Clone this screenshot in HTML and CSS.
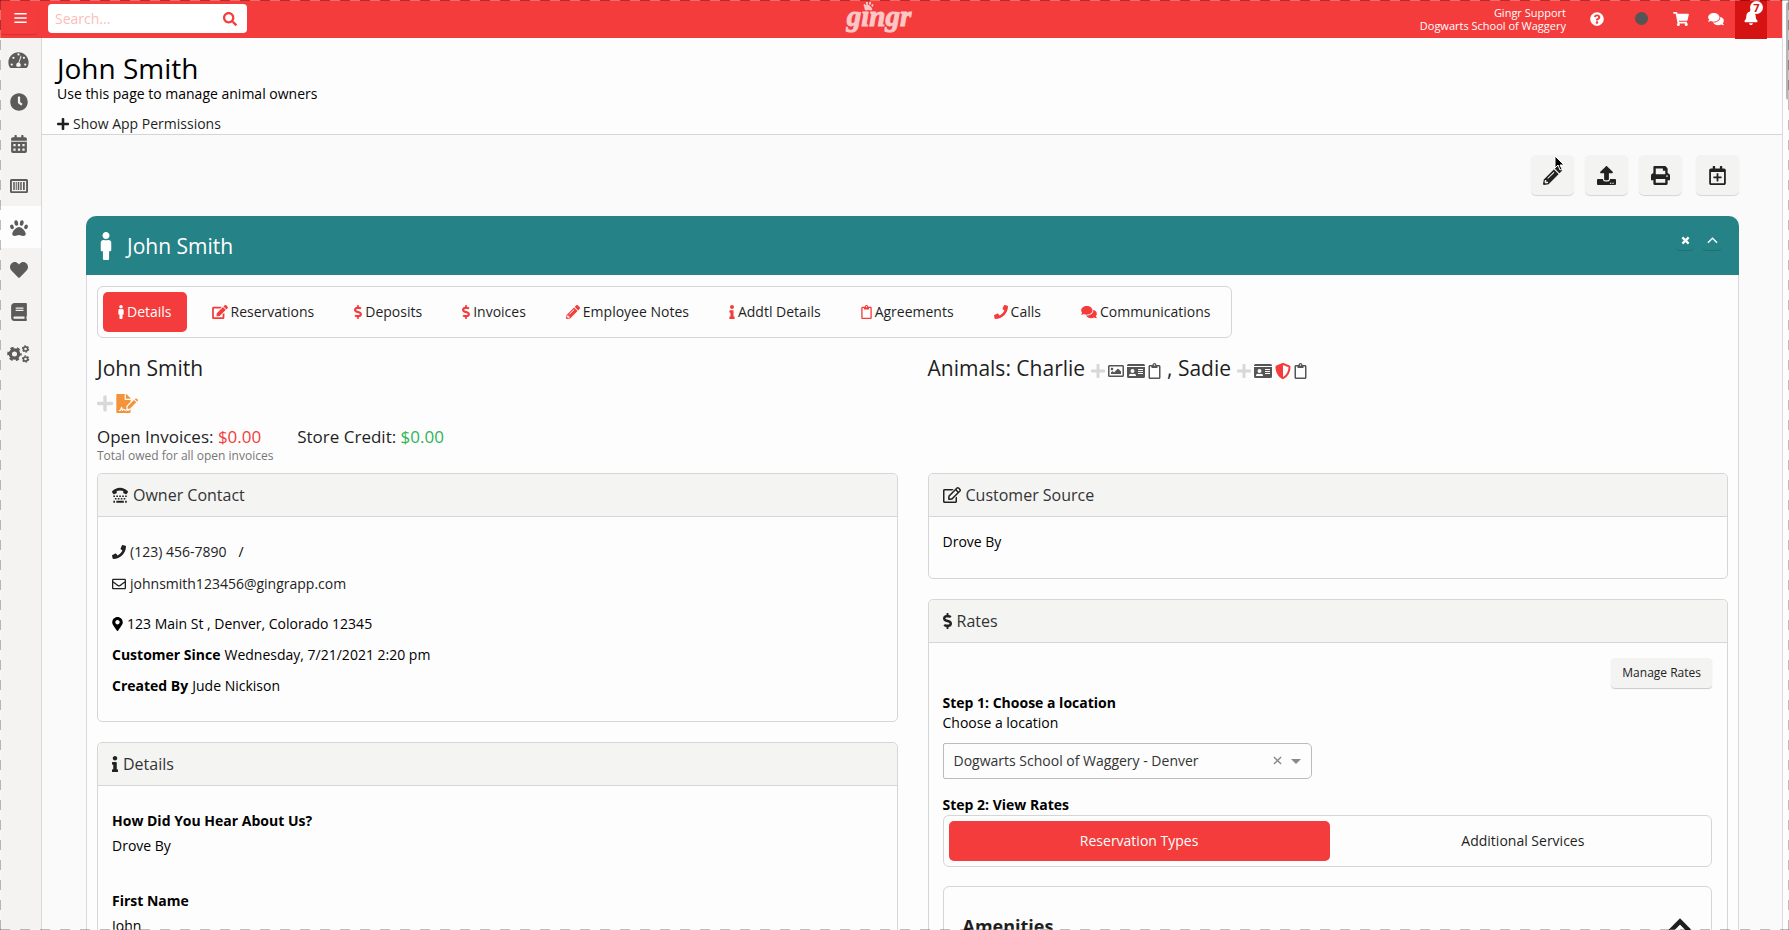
FILE: index.html
```html
<!DOCTYPE html>
<html lang="en">
  <head>
    <meta charset="UTF-8">
    <meta name="viewport" content="width=device-width, initial-scale=1.0">
    <title>John Smith</title>
    <link rel="stylesheet" href="styles.css">
  </head>
  <body>
    <!-- Icon sprite -->
    <svg class="sprite" aria-hidden="true">
      <symbol id="bars" viewBox="0 0 448 512"><path d="M0 70h448v56H0zM0 228h448v56H0zM0 386h448v56H0z"/></symbol>
      <symbol id="search" viewBox="0 0 512 512"><path d="M505 442.7L405.3 343c-4.5-4.5-10.6-7-17-7H372c27.6-35.3 44-79.7 44-128C416 93.1 322.9 0 208 0S0 93.1 0 208s93.1 208 208 208c48.3 0 92.7-16.4 128-44v16.3c0 6.4 2.5 12.5 7 17l99.7 99.7c9.4 9.4 24.6 9.4 33.9 0l28.3-28.3c9.4-9.4 9.4-24.6.1-34zM208 336c-70.7 0-128-57.2-128-128 0-70.7 57.2-128 128-128 70.7 0 128 57.2 128 128 0 70.7-57.2 128-128 128z"/></symbol>
      <symbol id="gauge" viewBox="0 0 576 512"><path fill-rule="evenodd" d="M288 32C129 32 0 161 0 320c0 53 14 102 39 145 6 9 16 15 27 15h444c11 0 21-6 27-15 25-43 39-92 39-145C576 161 447 32 288 32zM288 66a32 32 0 1 1 0 64 32 32 0 0 1 0-64zM96 352a32 32 0 1 1 0 64 32 32 0 0 1 0-64zM144 162a32 32 0 1 1 0 64 32 32 0 0 1 0-64zM442 162a32 32 0 1 1 0 64 32 32 0 0 1 0-64zM480 352a32 32 0 1 1 0 64 32 32 0 0 1 0-64zM353 129c13 4 20 18 16 31l-58 174c24 12 41 36 41 66 0 18-6 34-16 48h-96c-10-14-16-30-16-48 0-38 28-69 64-72l58-183c4-13 0-18 7-16z"/></symbol>
      <symbol id="clock" viewBox="0 0 512 512"><path d="M256,8C119,8,8,119,8,256S119,504,256,504,504,393,504,256,393,8,256,8Zm92.49,313h0l-20,25a16,16,0,0,1-22.49,2.5h0l-67-49.72a40,40,0,0,1-15-31.23V112a16,16,0,0,1,16-16h32a16,16,0,0,1,16,16V256l58,42.5A16,16,0,0,1,348.49,321Z"/></symbol>
      <symbol id="calendar" viewBox="0 0 448 512"><path fill-rule="evenodd" d="M0 192h448v272c0 26.500-21.500 48-48 48H48c-26.500 0-48-21.500-48-48zM64 256v64h64v-64zM192 256v64h64v-64zM320 256v64h64v-64zM64 384v64h64v-64zM192 384v64h64v-64zM320 384v64h64v-64zM0 160v-48c0-26.500 21.500-48 48-48h48V16q0-16 16-16h32q16 0 16 16v48h128V16q0-16 16-16h32q16 0 16 16v48h48c26.500 0 48 21.500 48 48v48z"/></symbol>
      <symbol id="barcode" viewBox="0 0 576 512"><path fill-rule="evenodd" d="M48 32h480q48 0 48 48v352q0 48-48 48H48q-48 0-48-48V80q0-48 48-48zM60 92v328h456V92zM104 130h48v252h-48zM184 130h32v252h-32zM248 130h48v252h-48zM328 130h48v252h-48zM416 130h56v252h-56z"/></symbol>
      <symbol id="paw" viewBox="0 0 512 512"><path d="M256 224c-79.410 0-192 122.760-192 200.250 0 34.900 26.810 55.750 71.740 55.750 48.840 0 81.090-25.080 120.260-25.080 39.510 0 71.850 25.080 120.260 25.080 44.930 0 71.740-20.850 71.740-55.750C448 346.760 335.410 224 256 224z"/><ellipse cx="56" cy="224" rx="50" ry="66" transform="rotate(-20 56 224)"/><ellipse cx="456" cy="224" rx="50" ry="66" transform="rotate(20 456 224)"/><ellipse cx="178" cy="114" rx="54" ry="78" transform="rotate(-14 178 114)"/><ellipse cx="334" cy="114" rx="54" ry="78" transform="rotate(14 334 114)"/></symbol>
      <symbol id="heart" viewBox="0 0 512 512"><path d="M462.3 62.6C407.5 15.9 326 24.3 275.7 76.2L256 96.5l-19.7-20.3C186.1 24.3 104.5 15.9 49.7 62.6c-62.8 53.6-66.1 149.8-9.9 207.9l193.500 199.800c12.500 12.900 32.800 12.900 45.300 0l193.500-199.800c56.300-58.100 53-154.300-9.800-207.900z"/></symbol>
      <symbol id="book" viewBox="0 0 448 512"><path d="M448 360V24c0-13.3-10.7-24-24-24H96C43 0 0 43 0 96v320c0 53 43 96 96 96h328c13.300 0 24-10.700 24-24v-16c0-7.500-3.500-14.300-8.900-18.700-4.200-15.400-4.200-59.300 0-74.700 5.400-4.300 8.900-11.100 8.900-18.600zM128 134c0-3.300 2.700-6 6-6h212c3.300 0 6 2.700 6 6v20c0 3.300-2.700 6-6 6H134c-3.300 0-6-2.700-6-6v-20zm0 64c0-3.300 2.700-6 6-6h212c3.300 0 6 2.700 6 6v20c0 3.300-2.700 6-6 6H134c-3.300 0-6-2.700-6-6v-20zm253.400 250H96c-17.700 0-32-14.300-32-32 0-17.600 14.400-32 32-32h285.400c-1.900 17.100-1.900 46.900 0 64z"/></symbol>
      <symbol id="cogs" viewBox="0 0 640 512"><g fill="none" stroke="currentColor"><circle cx="206" cy="256" r="118" stroke-width="92"/><circle cx="206" cy="256" r="176" stroke-width="60" stroke-dasharray="92 92.300" stroke-dashoffset="46"/><circle cx="520" cy="112" r="60" stroke-width="46"/><circle cx="520" cy="112" r="88" stroke-width="36" stroke-dasharray="46 46.100"/><circle cx="520" cy="400" r="60" stroke-width="46"/><circle cx="520" cy="400" r="88" stroke-width="36" stroke-dasharray="46 46.100"/></g></symbol>
      <symbol id="male" viewBox="0 0 192 512"><path d="M96 0c35.346 0 64 28.654 64 64s-28.654 64-64 64-64-28.654-64-64S60.654 0 96 0m48 144h-11.360c-22.711 10.443-49.590 10.894-73.280 0H48c-26.510 0-48 21.490-48 48v136c0 13.255 10.745 24 24 24h16v136c0 13.255 10.745 24 24 24h64c13.255 0 24-10.745 24-24V352h16c13.255 0 24-10.745 24-24V192c0-26.510-21.490-48-48-48z"/></symbol>
      <symbol id="edit" viewBox="0 0 576 512"><path d="M402.6 83.2l90.2 90.2c3.8 3.8 3.8 10 0 13.8L274.4 405.6l-92.8 10.3c-12.4 1.4-22.9-9.1-21.5-21.5l10.3-92.8L388.8 83.2c3.800-3.800 10-3.800 13.800 0zm162-22.900l-48.800-48.800c-15.200-15.200-39.900-15.200-55.200 0l-35.400 35.400c-3.800 3.800-3.800 10 0 13.800l90.200 90.200c3.800 3.800 10 3.800 13.800 0l35.400-35.400c15.200-15.300 15.200-40 0-55.200zM384 346.200V448H64V128h229.800c3.200 0 6.200-1.300 8.500-3.500l40-40c7.600-7.600 2.200-20.500-8.500-20.500H48C21.500 64 0 85.500 0 112v352c0 26.500 21.500 48 48 48h352c26.500 0 48-21.500 48-48V306.200c0-10.700-12.900-16-20.500-8.500l-40 40c-2.200 2.300-3.500 5.300-3.500 8.500z"/></symbol>
      <symbol id="edit-line" viewBox="0 0 576 512"><path d="M402.3 344.9l32-32c5-5 13.7-1.5 13.7 5.7V464c0 26.5-21.5 48-48 48H48c-26.500 0-48-21.500-48-48V112c0-26.500 21.500-48 48-48h273.500c7.100 0 10.700 8.600 5.700 13.700l-32 32c-1.500 1.500-3.500 2.300-5.700 2.300H48v352h352V350.500c0-2.100.8-4.100 2.300-5.600zm156.600-201.800L296.300 405.700l-90.400 10c-26.200 2.900-48.500-19.200-45.600-45.600l10-90.400L432.900 17.100c22.900-22.900 59.900-22.900 82.700 0l43.200 43.200c22.900 22.900 22.900 60 .1 82.800zM460.100 174L402 115.900 216.200 301.800l-7.300 65.300 65.300-7.300L460.100 174zm64.800-79.700l-43.200-43.200c-4.100-4.100-10.800-4.100-14.800 0L436 82l58.100 58.100 30.900-30.900c4-4.200 4-10.800-.1-14.900z"/></symbol>
      <symbol id="dollar" viewBox="0 0 288 512"><path d="M209.2 233.4l-108-31.6C88.7 198.2 80 186.5 80 173.5c0-16.3 13.2-29.5 29.5-29.5h66.3c12.2 0 24.2 3.7 34.2 10.5 6.1 4.1 14.3 3.1 19.5-2l34.8-34c7.1-6.9 6.1-18.4-1.8-24.5C238 74.800 207.400 64.100 176 64V16c0-8.800-7.200-16-16-16h-32c-8.800 0-16 7.200-16 16v48h-2.500C45.800 64-5.400 118.700.5 183.600c4.200 46.100 39.400 83.600 83.800 96.600l102.500 30c12.500 3.700 21.200 15.300 21.200 28.300 0 16.300-13.200 29.500-29.500 29.500h-66.300C100 368 88 364.300 78 357.500c-6.100-4.100-14.300-3.100-19.500 2l-34.800 34c-7.100 6.900-6.100 18.400 1.800 24.500 24.500 19.200 55.100 29.900 86.500 30v48c0 8.800 7.200 16 16 16h32c8.800 0 16-7.200 16-16v-48.200c46.600-.9 90.300-28.600 105.700-72.700 21.500-61.600-14.600-124.800-72.500-141.700z"/></symbol>
      <symbol id="pencil" viewBox="0 0 512 512"><path d="M497.9 142.1l-46.1 46.1c-4.7 4.7-12.3 4.7-17 0l-111-111c-4.7-4.7-4.7-12.3 0-17l46.1-46.1c18.7-18.7 49.1-18.7 67.9 0l60.1 60.1c18.8 18.7 18.8 49.1 0 67.9zM284.2 99.8L21.6 362.4.4 483.9c-2.9 16.4 11.4 30.6 27.8 27.8l121.5-21.3 262.6-262.6c4.7-4.7 4.7-12.3 0-17l-111-111c-4.800-4.700-12.400-4.700-17.100 0zM124.100 339.900c-5.500-5.500-5.500-14.300 0-19.800l154-154c5.500-5.500 14.300-5.500 19.800 0s5.500 14.300 0 19.800l-154 154c-5.500 5.500-14.300 5.500-19.800 0zM88 424h48v36.300l-64.500 11.300-31.100-31.100L51.700 376H88v48z"/></symbol>
      <symbol id="info" viewBox="0 0 192 512"><path d="M20 424.229h20V279.771H20c-11.046 0-20-8.954-20-20V212c0-11.046 8.954-20 20-20h112c11.046 0 20 8.954 20 20v212.229h20c11.046 0 20 8.954 20 20V492c0 11.046-8.954 20-20 20H20c-11.046 0-20-8.954-20-20v-47.771c0-11.046 8.954-20 20-20zM96 0C56.235 0 24 32.235 24 72s32.235 72 72 72 72-32.235 72-72S135.764 0 96 0z"/></symbol>
      <symbol id="clipboard" viewBox="0 0 384 512"><path d="M336 64h-80c0-35.3-28.7-64-64-64s-64 28.7-64 64H48C21.5 64 0 85.5 0 112v352c0 26.5 21.5 48 48 48h288c26.500 0 48-21.500 48-48V112c0-26.500-21.500-48-48-48zM192 40c13.300 0 24 10.700 24 24s-10.700 24-24 24-24-10.700-24-24 10.700-24 24-24zm144 418c0 3.300-2.700 6-6 6H54c-3.300 0-6-2.700-6-6V118c0-3.300 2.700-6 6-6h42v36c0 6.600 5.400 12 12 12h168c6.600 0 12-5.400 12-12v-36h42c3.300 0 6 2.700 6 6z"/></symbol>
      <symbol id="phone" viewBox="0 0 512 512"><path d="M493.4 24.6l-104-24c-11.3-2.6-22.9 3.3-27.5 13.9l-48 112c-4.2 9.8-1.4 21.3 6.9 28l60.6 49.6c-36 76.7-98.9 140.5-177.2 177.2l-49.6-60.6c-6.8-8.3-18.2-11.1-28-6.9l-112 48C3.900 366.500-2 378.100.6 389.400l24 104C27.100 504.200 36.700 512 48 512c256.100 0 464-207.500 464-464 0-11.200-7.700-20.900-18.600-23.400z"/></symbol>
      <symbol id="comments" viewBox="0 0 576 512"><path d="M416 192c0-88.4-93.1-160-208-160S0 103.6 0 192c0 34.3 14.1 65.900 38 92-13.400 30.200-35.500 54.200-35.800 54.500-2.200 2.300-2.800 5.700-1.500 8.700S4.800 352 8 352c36.600 0 66.900-12.300 88.700-25 32.200 15.700 70.300 25 111.300 25 114.900 0 208-71.600 208-160zm122 220c23.900-26 38-57.700 38-92 0-66.900-53.500-124.200-129.300-148.100.9 6.600 1.300 13.300 1.300 20.100 0 105.900-107.700 192-240 192-10.800 0-21.300-.8-31.700-1.900C207.800 439.600 281.800 480 368 480c41 0 79.100-9.200 111.300-25 21.800 12.700 52.100 25 88.700 25 3.200 0 6.100-1.900 7.300-4.800 1.300-2.900.7-6.300-1.500-8.700-.3-.3-22.400-24.200-35.800-54.500z"/></symbol>
      <symbol id="question" viewBox="0 0 512 512"><path d="M504 256c0 136.997-111.043 248-248 248S8 392.997 8 256C8 119.083 119.043 8 256 8s248 111.083 248 248zM262.655 90c-54.497 0-89.255 22.957-116.549 63.758-3.536 5.286-2.353 12.415 2.715 16.258l34.699 26.310c5.205 3.947 12.621 3.008 16.665-2.122 17.864-22.658 30.113-35.797 57.303-35.797 20.429 0 45.698 13.148 45.698 32.958 0 14.976-12.363 22.667-32.534 33.976C247.128 238.528 216 254.941 216 296v4c0 6.627 5.373 12 12 12h56c6.627 0 12-5.373 12-12v-1.333c0-28.462 83.186-29.647 83.186-106.667 0-58.002-60.165-102-116.531-102zM256 338c-25.365 0-46 20.635-46 46 0 25.364 20.635 46 46 46s46-20.636 46-46c0-25.365-20.635-46-46-46z"/></symbol>
      <symbol id="cart" viewBox="0 0 576 512"><path d="M528.12 301.319l47.273-208C578.806 78.301 567.391 64 551.990 64H159.208l-9.166-44.810C147.758 8.021 137.930 0 126.529 0H24C10.745 0 0 10.745 0 24v16c0 13.255 10.745 24 24 24h69.883l70.248 343.435C147.325 417.100 136 435.222 136 456c0 30.928 25.072 56 56 56s56-25.072 56-56c0-15.674-6.447-29.835-16.824-40h209.647C430.447 426.165 424 440.326 424 456c0 30.928 25.072 56 56 56s56-25.072 56-56c0-22.172-12.888-41.332-31.579-50.405l5.517-24.276c3.413-15.018-8.002-29.319-23.403-29.319H218.117l-6.545-32h293.145c11.206 0 20.920-7.754 23.403-18.681z"/></symbol>
      <symbol id="bell" viewBox="0 0 448 512"><path d="M224 512c35.320 0 63.970-28.650 63.970-64H160.030c0 35.350 28.650 64 63.970 64zm215.390-149.710c-19.320-20.760-55.470-51.990-55.470-154.290 0-77.700-54.480-139.900-127.940-155.160V32c0-17.670-14.320-32-31.980-32s-31.980 14.330-31.980 32v20.840C118.560 68.100 64.080 130.300 64.080 208c0 102.300-36.150 133.530-55.470 154.290-6 6.450-8.660 14.160-8.610 21.710.11 16.400 12.980 32 32.100 32h383.800c19.120 0 32-15.600 32.100-32 .05-7.550-2.610-15.270-8.610-21.710z"/></symbol>
      <symbol id="upload" viewBox="0 0 512 512"><path d="M296 384h-80c-13.3 0-24-10.7-24-24V192h-87.7c-17.8 0-26.7-21.5-14.1-34.1L242.3 5.7c7.5-7.5 19.800-7.500 27.300 0l152.200 152.200c12.600 12.600 3.700 34.100-14.100 34.100H320v168c0 13.300-10.700 24-24 24zm216-8v112c0 13.300-10.700 24-24 24H24c-13.300 0-24-10.700-24-24V376c0-13.300 10.700-24 24-24h136v8c0 30.900 25.100 56 56 56h80c30.900 0 56-25.100 56-56v-8h136c13.300 0 24 10.700 24 24zm-124 88c0-11-9-20-20-20s-20 9-20 20 9 20 20 20 20-9 20-20zm64 0c0-11-9-20-20-20s-20 9-20 20 9 20 20 20 20-9 20-20z"/></symbol>
      <symbol id="print" viewBox="0 0 512 512"><path d="M448 192V77.250c0-8.490-3.370-16.620-9.370-22.630L393.370 9.370c-6-6-14.140-9.370-22.630-9.370H96C78.330 0 64 14.330 64 32v160c-35.350 0-64 28.650-64 64v112c0 8.840 7.160 16 16 16h48v96c0 17.670 14.330 32 32 32h320c17.670 0 32-14.330 32-32v-96h48c8.840 0 16-7.160 16-16V256c0-35.350-28.650-64-64-64zm-64 256H128v-96h256v96zm0-224H128V64h192v48c0 8.840 7.160 16 16 16h48v96zm48 72c-13.250 0-24-10.750-24-24 0-13.260 10.750-24 24-24s24 10.740 24 24c0 13.250-10.750 24-24 24z"/></symbol>
      <symbol id="calendar-plus" viewBox="0 0 448 512"><path d="M336 292v24c0 6.6-5.4 12-12 12h-76v76c0 6.6-5.4 12-12 12h-24c-6.600 0-12-5.400-12-12v-76h-76c-6.600 0-12-5.400-12-12v-24c0-6.600 5.400-12 12-12h76v-76c0-6.600 5.400-12 12-12h24c6.600 0 12 5.400 12 12v76h76c6.600 0 12 5.400 12 12zm112-180v352c0 26.500-21.500 48-48 48H48c-26.500 0-48-21.500-48-48V112c0-26.500 21.500-48 48-48h48V12c0-6.600 5.400-12 12-12h40c6.600 0 12 5.400 12 12v52h128V12c0-6.600 5.400-12 12-12h40c6.600 0 12 5.400 12 12v52h48c26.500 0 48 21.500 48 48zm-48 346V160H48v298c0 3.300 2.700 6 6 6h340c3.300 0 6-2.700 6-6z"/></symbol>
      <symbol id="image" viewBox="0 0 512 512"><path d="M464 64H48C21.490 64 0 85.490 0 112v288c0 26.510 21.490 48 48 48h416c26.510 0 48-21.490 48-48V112c0-26.510-21.490-48-48-48zm-6 336H54a6 6 0 0 1-6-6V118a6 6 0 0 1 6-6h404a6 6 0 0 1 6 6v276a6 6 0 0 1-6 6zM128 152c-22.091 0-40 17.909-40 40s17.909 40 40 40 40-17.909 40-40-17.909-40-40-40zM96 352h320v-80l-87.515-87.515c-4.686-4.686-12.284-4.686-16.971 0L192 304l-39.515-39.515c-4.686-4.686-12.284-4.686-16.971 0L96 304v48z"/></symbol>
      <symbol id="id-card" viewBox="0 0 576 512"><path fill-rule="evenodd" d="M48 32h480q48 0 48 48v16H0V80q0-48 48-48zM0 128h576v304q0 48-48 48H48q-48 0-48-48zM176 192a64 64 0 1 0 0 128 64 64 0 0 0 0-128zM64 400q0 16 16 16h192q16 0 16-16c0-34-27-58-60-58q-52 14-104 0c-33 0-60 24-60 58zM352 192v32h160v-32zM352 256v32h160v-32zM352 320v32h160v-32z"/></symbol>
      <symbol id="shield" viewBox="0 0 512 512"><path d="M466.5 83.7l-192-80a48.15 48.15 0 0 0-36.9 0l-192 80C27.7 91.1 16 108.6 16 128c0 198.5 114.5 335.700 221.500 380.300 11.800 4.900 25.100 4.900 36.900 0C360.100 472.600 496 349.300 496 128c0-19.400-11.700-36.900-29.500-44.300zM256.100 446.300l-.1-381 175.900 73.300c-3.300 151.400-82.100 261.100-175.800 307.700z"/></symbol>
      <symbol id="envelope" viewBox="0 0 512 512"><path d="M464 64H48C21.490 64 0 85.490 0 112v288c0 26.510 21.490 48 48 48h416c26.510 0 48-21.490 48-48V112c0-26.510-21.490-48-48-48zm0 48v40.805c-22.422 18.259-58.168 46.651-134.587 106.490-16.841 13.247-50.201 45.072-73.413 44.701-23.208.375-56.579-31.459-73.413-44.701C106.180 199.465 70.425 171.067 48 152.805V112h416zM48 400V214.398c22.914 18.251 55.409 43.862 104.938 82.646 21.857 17.205 60.134 55.186 103.062 54.955 42.717.231 80.509-37.199 103.053-54.947 49.528-38.783 82.032-64.401 104.947-82.653V400H48z"/></symbol>
      <symbol id="marker" viewBox="0 0 384 512"><path d="M172.268 501.670C26.970 291.031 0 269.413 0 192 0 85.961 85.961 0 192 0s192 85.961 192 192c0 77.413-26.970 99.031-172.268 309.670-9.535 13.774-29.930 13.773-39.464 0zM192 272c44.183 0 80-35.817 80-80s-35.817-80-80-80-80 35.817-80 80 35.817 80 80 80z"/></symbol>
      <symbol id="tty" viewBox="0 0 512 512"><path d="M6 138C140-15 372-15 506 138c8 10 8 20 2 30l-38 54c-6 8-16 10-24 6l-76-30c-9-4-13-12-12-20l5-50c-66-24-148-24-214 0l5 50c1 8-3 16-12 20l-76 30c-8 4-18 2-24-6L4 168c-6-10-6-20 2-30zM44 268h52v50H44zM138 268h52v50h-52zM232 268h52v50h-52zM326 268h52v50h-52zM420 268h52v50h-52zM92 352h52v50H92zM186 352h52v50h-52zM280 352h52v50h-52zM374 352h52v50h-52zM44 440h52v60H44zM138 440h240v60H138zM420 440h52v60h-52z"/></symbol>
      <symbol id="file-sign" viewBox="0 0 576 512"><path d="M0 24Q0 0 24 0h200v136q0 24 24 24h136v48L272 320v98c-16 8-38 4-48-12-8-14-28-14-38 0l-8 12-24-62c-6-16-22-16-28 0l-22 62q-4 10-14 10H64v32h28c22 0 38-12 46-34l4-10 14 36c4 12 18 12 24 2l20-32c10 24 34 30 60 30h84l40-40v76q0 24-24 24H24q-24 0-24-24zM256 0h6q10 0 17 7l98 98q7 7 7 17v6H256zM304 334l172-172 62 62-172 172h-62zM560 202l-62-62 22-22q12-12 24 0l38 38q12 12 0 24z"/></symbol>
      <symbol id="plus" viewBox="0 0 448 512"><path d="M416 208H272V64c0-17.670-14.330-32-32-32h-32c-17.670 0-32 14.330-32 32v144H32c-17.670 0-32 14.330-32 32v32c0 17.670 14.330 32 32 32h144v144c0 17.670 14.330 32 32 32h32c17.670 0 32-14.330 32-32V304h144c17.670 0 32-14.330 32-32v-32c0-17.670-14.330-32-32-32z"/></symbol>
      <symbol id="times" viewBox="0 0 10 10"><path d="M1.500 1.500l7 7m0-7l-7 7" fill="none" stroke="currentColor" stroke-width="2.500"/></symbol>
      <symbol id="up" viewBox="0 0 12 8"><path d="M1 6.500l5-5 5 5" fill="none" stroke="currentColor" stroke-width="1.500"/></symbol>
      <symbol id="up-bold" viewBox="0 0 24 16"><path d="M2 13.500L12 3.500l10 10" fill="none" stroke="currentColor" stroke-width="4.500"/></symbol>
      <symbol id="thin-x" viewBox="0 0 10 10"><path d="M1 1l8 8m0-8L1 9" fill="none" stroke="currentColor" stroke-width="1.500"/></symbol>
    </svg>

    <div class="page">
      <header class="navbar">
        <div class="nav-left">
          <button class="menu-btn" aria-label="Menu"><svg class="icon"><use href="#bars"/></svg></button>
          <form class="search">
            <input type="text" placeholder="Search..." aria-label="Search">
            <button type="button" aria-label="Search"><svg class="icon"><use href="#search"/></svg></button>
          </form>
        </div>
        <a href="#" class="brand">gingr<svg class="brand-paw"><use href="#paw"/></svg></a>
        <div class="nav-right">
          <div class="account">
            <div>Gingr Support</div>
            <div>Dogwarts School of Waggery</div>
          </div>
          <a href="#" class="nav-link" aria-label="Help"><svg class="icon"><use href="#question"/></svg></a>
          <a href="#" class="nav-link status" aria-label="Status"><span class="dot"></span></a>
          <a href="#" class="nav-link cart" aria-label="Cart"><svg class="icon wide"><use href="#cart"/></svg></a>
          <a href="#" class="nav-link" aria-label="Messages"><svg class="icon wide"><use href="#comments"/></svg></a>
          <a href="#" class="nav-link alerts" aria-label="Alerts"><svg class="icon"><use href="#bell"/></svg><span class="badge">7</span></a>
        </div>
      </header>

      <div class="layout">
        <nav class="sidebar">
          <a href="#" aria-label="Dashboard"><svg class="side-wide"><use href="#gauge"/></svg></a>
          <a href="#" aria-label="Time clock"><svg><use href="#clock"/></svg></a>
          <a href="#" aria-label="Calendar"><svg><use href="#calendar"/></svg></a>
          <a href="#" aria-label="Point of sale"><svg><use href="#barcode"/></svg></a>
          <a href="#" class="active" aria-label="Owners and animals"><svg><use href="#paw"/></svg></a>
          <a href="#" aria-label="Marketing"><svg><use href="#heart"/></svg></a>
          <a href="#" aria-label="Reports"><svg><use href="#book"/></svg></a>
          <a href="#" aria-label="Admin"><svg class="side-wide"><use href="#cogs"/></svg></a>
        </nav>

        <main>
          <div class="page-header">
            <h1>John Smith</h1>
            <p>Use this page to manage animal owners</p>
            <a href="#" class="permissions"><svg class="icon"><use href="#plus"/></svg>Show App Permissions</a>
          </div>

          <div class="content">
            <div class="actions">
              <button aria-label="Edit"><svg><use href="#pencil"/></svg></button>
              <button aria-label="Upload"><svg><use href="#upload"/></svg></button>
              <button aria-label="Print"><svg><use href="#print"/></svg></button>
              <button class="last" aria-label="New reservation"><svg><use href="#calendar-plus"/></svg></button>
              <svg class="pointer" viewBox="0 0 10 16"><path d="M1 1v12l3-3 2 5 2-1-2-4h4z" stroke="#fff" stroke-width="1"/></svg>
            </div>

            <section class="panel">
              <div class="panel-header">
                <svg class="owner-icon"><use href="#male"/></svg>
                <h2>John Smith</h2>
                <button aria-label="Close"><svg><use href="#times"/></svg></button>
                <button aria-label="Collapse"><svg><use href="#up"/></svg></button>
              </div>
              <div class="panel-body">
                <nav class="tabs">
                  <a href="#" class="active"><svg class="icon thin"><use href="#male"/></svg>Details</a>
                  <a href="#"><svg class="icon wide"><use href="#edit"/></svg>Reservations</a>
                  <a href="#"><svg class="icon narrow"><use href="#dollar"/></svg>Deposits</a>
                  <a href="#"><svg class="icon narrow"><use href="#dollar"/></svg>Invoices</a>
                  <a href="#"><svg class="icon"><use href="#pencil"/></svg>Employee Notes</a>
                  <a href="#"><svg class="icon thin"><use href="#info"/></svg>Addtl Details</a>
                  <a href="#"><svg class="icon clip"><use href="#clipboard"/></svg>Agreements</a>
                  <a href="#"><svg class="icon"><use href="#phone"/></svg>Calls</a>
                  <a href="#"><svg class="icon wide"><use href="#comments"/></svg>Communications</a>
                </nav>

                <div class="columns summary">
                  <div>
                    <h3>John Smith</h3>
                    <div class="owner-icons">
                      <svg class="add"><use href="#plus"/></svg>
                      <svg class="sign"><use href="#file-sign"/></svg>
                    </div>
                    <div class="balances">
                      <span>Open Invoices: <b class="red">$0.00</b></span>
                      <span>Store Credit: <b class="green">$0.00</b></span>
                    </div>
                    <small>Total owed for all open invoices</small>
                  </div>
                  <h3 class="animals">
                    Animals: Charlie
                    <span class="flags">
                      <svg class="add"><use href="#plus"/></svg>
                      <svg><use href="#image"/></svg>
                      <svg class="flag-wide"><use href="#id-card"/></svg>
                      <svg class="flag-clip"><use href="#clipboard"/></svg>
                    </span>
                    , Sadie
                    <span class="flags">
                      <svg class="add"><use href="#plus"/></svg>
                      <svg class="flag-wide"><use href="#id-card"/></svg>
                      <svg class="red"><use href="#shield"/></svg>
                      <svg class="flag-clip"><use href="#clipboard"/></svg>
                    </span>
                  </h3>
                </div>

                <div class="columns">
                  <div class="column">
                    <section class="card">
                      <h4><svg><use href="#tty"/></svg>Owner Contact</h4>
                      <div class="card-body contact">
                        <p><a href="#"><svg class="icon"><use href="#phone"/></svg>(123) 456-7890</a><span class="slash">/</span></p>
                        <p><a href="#"><svg class="icon"><use href="#envelope"/></svg>johnsmith123456@gingrapp.com</a></p>
                        <p class="address"><svg class="icon clip"><use href="#marker"/></svg>123 Main St , Denver, Colorado 12345</p>
                        <p><b>Customer Since</b> Wednesday, 7/21/2021 2:20 pm</p>
                        <p><b>Created By</b> Jude Nickison</p>
                      </div>
                    </section>
                    <section class="card">
                      <h4><svg class="thin"><use href="#info"/></svg>Details</h4>
                      <dl class="card-body fields">
                        <dt>How Did You Hear About Us?</dt>
                        <dd>Drove By</dd>
                        <dt>First Name</dt>
                        <dd>John</dd>
                      </dl>
                    </section>
                  </div>

                  <div class="column">
                    <section class="card">
                      <h4><svg class="wide"><use href="#edit-line"/></svg>Customer Source</h4>
                      <div class="card-body source">Drove By</div>
                    </section>
                    <section class="card">
                      <h4><svg class="narrow"><use href="#dollar"/></svg>Rates</h4>
                      <div class="card-body rates">
                        <button class="manage">Manage Rates</button>
                        <b>Step 1: Choose a location</b>
                        <label for="location">Choose a location</label>
                        <div class="select-box">
                          <select id="location">
                            <option>Dogwarts School of Waggery - Denver</option>
                          </select>
                          <button class="clear" aria-label="Clear location"><svg><use href="#thin-x"/></svg></button>
                          <span class="caret"></span>
                        </div>
                        <b>Step 2: View Rates</b>
                        <div class="rate-tabs">
                          <button class="active">Reservation Types</button>
                          <button>Additional Services</button>
                        </div>
                        <div class="amenities">
                          <h5>Amenities</h5>
                          <svg><use href="#up-bold"/></svg>
                        </div>
                      </div>
                    </section>
                  </div>
                </div>
              </div>
            </section>
          </div>
        </main>
      </div>
    </div>
    <div class="scroll-thumb"></div>
    <div class="dashes"></div>
  </body>
</html>
```
FILE: styles.css
```css
* {
  box-sizing: border-box;
}

body {
  margin: 0;
  height: 100vh;
  overflow: hidden;
  font-family: "Open Sans", "Noto Sans", sans-serif;
  font-size: 14px;
  line-height: 20px;
  color: #000;
  background-color: #fdfdfd;
}

h1,
h2,
h3,
h4,
h5,
p,
dl,
dd {
  margin: 0;
  font-weight: normal;
}

a {
  color: inherit;
  text-decoration: none;
}

button,
input,
select {
  font: inherit;
}

button {
  border: none;
  padding: 0;
  cursor: pointer;
}

svg {
  fill: currentColor;
  flex: none;
}

.sprite {
  display: none;
}

.icon {
  width: 14px;
  height: 14px;
}

.icon.wide {
  width: 16px;
}

.icon.thin {
  width: 6px;
}

.icon.narrow {
  width: 8px;
}

.icon.clip {
  width: 11px;
}

.page {
  height: 100vh;
  margin-right: 6px;
  border-right: 1px solid #dadada;
  display: flex;
  flex-direction: column;
}

/* Top bar */
.navbar {
  flex: none;
  height: 38px;
  display: grid;
  grid-template-columns: 1fr auto 1fr;
  background-color: #f33c3b;
  color: #fff;
}

.nav-left,
.nav-right {
  display: flex;
  align-items: center;
}

.nav-left {
  padding-bottom: 2px;
}

.menu-btn {
  width: 38px;
  height: 30px;
  padding: 2px 0 0 2px;
  margin-right: 10px;
  border-radius: 4px;
  background: none;
  color: #fff;
  box-shadow: 0 1px 1px rgba(0, 0, 0, 0.15);
}

.menu-btn .icon {
  width: 13px;
}

.search {
  display: flex;
  align-items: center;
  width: 199px;
  height: 29px;
  padding: 0 10px 0 7px;
  border-radius: 4px;
  background-color: #fff;
}

.search input {
  flex: 1;
  min-width: 0;
  padding: 0;
  border: none;
  outline: none;
  background: none;
}

.search input::placeholder {
  color: #fbbcbb;
}

.search button {
  height: 16px;
  background: none;
  color: #f33c3b;
}

.brand {
  position: relative;
  margin-right: 24px;
  font-family: "Liberation Serif", serif;
  font-size: 29px;
  font-weight: bold;
  font-style: italic;
  line-height: 32px;
  color: #fcc7c7;
  -webkit-text-stroke: 1px #fcc7c7;
}

.brand-paw {
  position: absolute;
  left: 16px;
  top: 1px;
  width: 11px;
  height: 10px;
}

.nav-right {
  justify-content: flex-end;
  padding-right: 15px;
}

.account {
  margin-right: 12px;
  padding-bottom: 1px;
  font-size: 11px;
  line-height: 13px;
  text-align: right;
}

.nav-link {
  display: flex;
  justify-content: center;
  width: 32px;
  margin-left: 3px;
  padding-bottom: 2px;
}

.nav-link.status {
  margin-left: 12px;
}

.nav-link.cart {
  margin-left: 8px;
}

.dot {
  width: 13px;
  height: 13px;
  border-radius: 50%;
  background-color: #555;
}

.alerts {
  position: relative;
  align-items: center;
  align-self: stretch;
  height: 39px;
  padding-bottom: 4px;
  background-color: #d51312;
}

.alerts .icon {
  height: 15px;
}

.badge {
  position: absolute;
  top: 1px;
  right: 4px;
  width: 13px;
  border-radius: 7px;
  background-color: #fff;
  color: #d51312;
  font-size: 11px;
  font-weight: bold;
  line-height: 13px;
  text-align: center;
}

/* Side menu */
.layout {
  flex: 1;
  min-height: 0;
  display: flex;
}

.sidebar {
  flex: none;
  width: 42px;
  border-right: 1px solid #d8d8d8;
  background-color: #f4f3f2;
  color: #5b5b5b;
}

.sidebar a {
  display: flex;
  align-items: center;
  justify-content: center;
  height: 42px;
  padding: 2px 4px 0 0;
}

.sidebar a.active {
  background-color: #fdfdfd;
}

.sidebar svg {
  width: 18px;
  height: 18px;
}

.sidebar .side-wide {
  width: 23px;
}

main {
  flex: 1;
  min-width: 0;
  display: flex;
  flex-direction: column;
}

.page-header {
  flex: none;
  padding: 13px 15px 0;
  height: 97px;
  border-bottom: 1px solid #d5d5d5;
}

.page-header h1 {
  font-size: 28px;
  line-height: 34px;
}

.page-header p {
  line-height: 18px;
}

.permissions {
  display: flex;
  align-items: center;
  gap: 4px;
  margin-top: 11px;
  color: #1f1f1f;
}

.permissions .icon {
  width: 12px;
}

.content {
  flex: 1;
  min-height: 0;
  overflow: hidden;
  padding: 20px 43px 0 44px;
  background-color: #fafafa;
}

.actions {
  position: relative;
  display: flex;
  justify-content: flex-end;
  gap: 11px;
  margin-bottom: 21px;
}

.actions button {
  display: flex;
  align-items: center;
  justify-content: center;
  width: 43px;
  height: 40px;
  border-radius: 5px;
  background-color: #f3f3f2;
  color: #222;
  box-shadow: 0 1px 1px rgba(0, 0, 0, 0.15);
}

.actions .last {
  margin-left: 3px;
}

.actions svg {
  width: 19px;
  height: 19px;
}

.actions .pointer {
  position: absolute;
  right: 175px;
  top: 0;
  width: 10px;
  height: 16px;
  fill: #000;
}

/* Owner panel */
.panel {
  border: 1px solid #d6d8d9;
  border-top: none;
  border-radius: 10px 10px 0 0;
  background-color: #fdfdfd;
}

.panel-header {
  display: flex;
  align-items: flex-start;
  height: 59px;
  margin: 0 -1px;
  padding: 16px 18px 0 14px;
  border-radius: 10px 10px 0 0;
  background-color: #258388;
  color: #fff;
}

.owner-icon {
  width: 12px;
  height: 28px;
}

.panel-header h2 {
  flex: 1;
  margin-left: 15px;
  font-size: 21px;
  line-height: 28px;
}

.panel-header button {
  display: flex;
  align-items: center;
  justify-content: center;
  width: 18px;
  height: 18px;
  margin-left: 9px;
  padding-bottom: 2px;
  border-radius: 4px;
  background: none;
  color: #fff;
  box-shadow: 0 1px 0 rgba(0, 0, 0, 0.15);
}

.panel-header button svg {
  width: 11px;
  height: 9px;
}

.panel-body {
  padding: 11px 10px 0;
}

.tabs {
  display: flex;
  gap: 10px;
  width: fit-content;
  padding: 5px;
  border: 1px solid #d6d6d6;
  border-radius: 6px;
}

.tabs a {
  display: flex;
  align-items: center;
  gap: 3px;
  height: 40px;
  padding: 0 15px;
  border-radius: 5px;
  color: #1f1f1f;
}

.tabs svg {
  color: #f33c3b;
}

.tabs .active,
.rate-tabs .active {
  background-color: #f33c3b;
  color: #fff;
}

.tabs .active svg {
  color: #fff;
}

.columns {
  display: grid;
  grid-template-columns: 1fr 1fr;
  gap: 30px;
}

.summary {
  padding: 16px 0 10px;
}

h3 {
  font-size: 21px;
  line-height: 28px;
  color: #1f1f1f;
}

.owner-icons {
  display: flex;
  gap: 3px;
  margin-top: 12px;
}

.owner-icons svg {
  width: 16px;
  height: 19px;
}

.owner-icons .sign {
  width: 22px;
  color: #f3933a;
}

svg.add {
  color: #d8d8d8;
}

.red {
  color: #f33c3b;
}

.green {
  color: #2fb457;
}

.balances {
  display: flex;
  gap: 36px;
  margin-top: 12px;
  font-size: 17px;
  line-height: 24px;
  color: #1f1f1f;
}

.balances b {
  font-weight: normal;
}

small {
  display: block;
  font-size: 12px;
  line-height: 14px;
  color: #777;
}

.flags {
  display: inline-flex;
  align-items: center;
  gap: 3px;
  height: 17px;
  margin-right: 1px;
  vertical-align: -3px;
  color: #555;
}

.flags svg {
  width: 16px;
  height: 16px;
}

.flags svg.add {
  width: 14px;
}

.flags svg.flag-wide {
  width: 18px;
}

.flags svg.flag-clip {
  width: 13px;
}

.flags svg.red {
  color: #f33c3b;
}

.column {
  display: flex;
  flex-direction: column;
  gap: 20px;
}

.card {
  border: 1px solid #d6d6d6;
  border-radius: 5px;
}

.card h4 {
  display: flex;
  align-items: center;
  gap: 5px;
  height: 43px;
  padding: 0 14px;
  border-bottom: 1px solid #d6d6d6;
  border-radius: 5px 5px 0 0;
  background-color: #f4f4f3;
  font-size: 16px;
  color: #333;
}

.card h4 svg {
  width: 16px;
  height: 16px;
  color: #222;
}

.card h4 .wide {
  width: 18px;
}

.card h4 .narrow {
  width: 9px;
}

.card h4 .thin {
  width: 6px;
}

.card-body {
  padding: 15px 15px 15px 14px;
}

.contact {
  padding-top: 25px;
  padding-bottom: 25px;
}

.contact p {
  display: flex;
  align-items: center;
  gap: 4px;
  margin-bottom: 11px;
}

.contact p:nth-child(-n+2) {
  margin-bottom: 12px;
}

.contact .address {
  margin-top: 20px;
}

.contact p:last-child {
  margin-bottom: 0;
}

.contact a {
  display: flex;
  align-items: center;
  gap: 4px;
  color: #222;
}

.slash {
  margin-left: 8px;
}

.fields {
  padding-top: 25px;
}

.fields dt {
  margin-bottom: 5px;
  font-weight: bold;
}

.fields dd {
  margin-bottom: 35px;
}

.source {
  padding-bottom: 26px;
}

.rates {
  display: flex;
  flex-direction: column;
}

.manage {
  align-self: flex-end;
  height: 30px;
  margin-bottom: 5px;
  padding: 0 11px;
  border-radius: 4px;
  background-color: #f3f3f2;
  color: #222;
  font-size: 12px;
  box-shadow: 0 1px 1px rgba(0, 0, 0, 0.2);
}

.select-box {
  position: relative;
  width: 48%;
  margin: 10px 0 16px;
}

.select-box select {
  width: 100%;
  height: 36px;
  padding: 0 45px 0 10px;
  border: 1px solid #bbb;
  border-radius: 2px 5px 5px 2px;
  appearance: none;
  background-color: #fdfdfd;
  color: #333;
}

.clear {
  position: absolute;
  top: 12px;
  right: 30px;
  height: 9px;
  background: none;
  color: #888;
  line-height: 9px;
}

.clear svg {
  width: 9px;
  height: 9px;
}

.caret {
  position: absolute;
  top: 16px;
  right: 11px;
  border: 5px solid transparent;
  border-top-color: #888;
  border-bottom: none;
}

.rate-tabs {
  display: grid;
  grid-template-columns: 51fr 49fr;
  gap: 10px;
  padding: 5px;
  border: 1px solid #d6d6d6;
  border-radius: 6px;
}

.rate-tabs button {
  height: 40px;
  border-radius: 5px;
  background: none;
  color: #1f1f1f;
}

.rate-tabs button.active {
  background-color: #f33c3b;
  color: #fff;
}

.amenities {
  display: flex;
  align-items: center;
  justify-content: space-between;
  margin-top: 19px;
  padding: 26px 19px;
  border: 1px solid #d6d6d6;
  border-radius: 6px;
  color: #1f1f1f;
}

.amenities h5 {
  font-size: 18px;
  font-weight: bold;
  line-height: 26px;
}

.amenities svg {
  width: 24px;
  height: 16px;
}

/* Scroll thumb and the dashed frame lie over everything else */
.scroll-thumb {
  position: fixed;
  top: 2px;
  right: 0;
  width: 3px;
  height: 98px;
  border-radius: 3px 0 0 3px;
  background-color: #b5b5b5;
}

.dashes {
  position: fixed;
  inset: 0;
  pointer-events: none;
  background:
    repeating-linear-gradient(90deg, rgba(0, 0, 0, 0.25) 0 10px, rgba(255, 255, 255, 0.25) 10px 20px) top / 100% 1px no-repeat,
    repeating-linear-gradient(90deg, rgba(0, 0, 0, 0.25) 0 10px, rgba(255, 255, 255, 0.25) 10px 20px) bottom / 100% 1px no-repeat,
    repeating-linear-gradient(0deg, rgba(0, 0, 0, 0.25) 0 10px, rgba(255, 255, 255, 0.25) 10px 20px) left / 1px 100% no-repeat,
    repeating-linear-gradient(0deg, rgba(0, 0, 0, 0.25) 0 10px, rgba(255, 255, 255, 0.25) 10px 20px) right / 1px 100% no-repeat;
}
```
